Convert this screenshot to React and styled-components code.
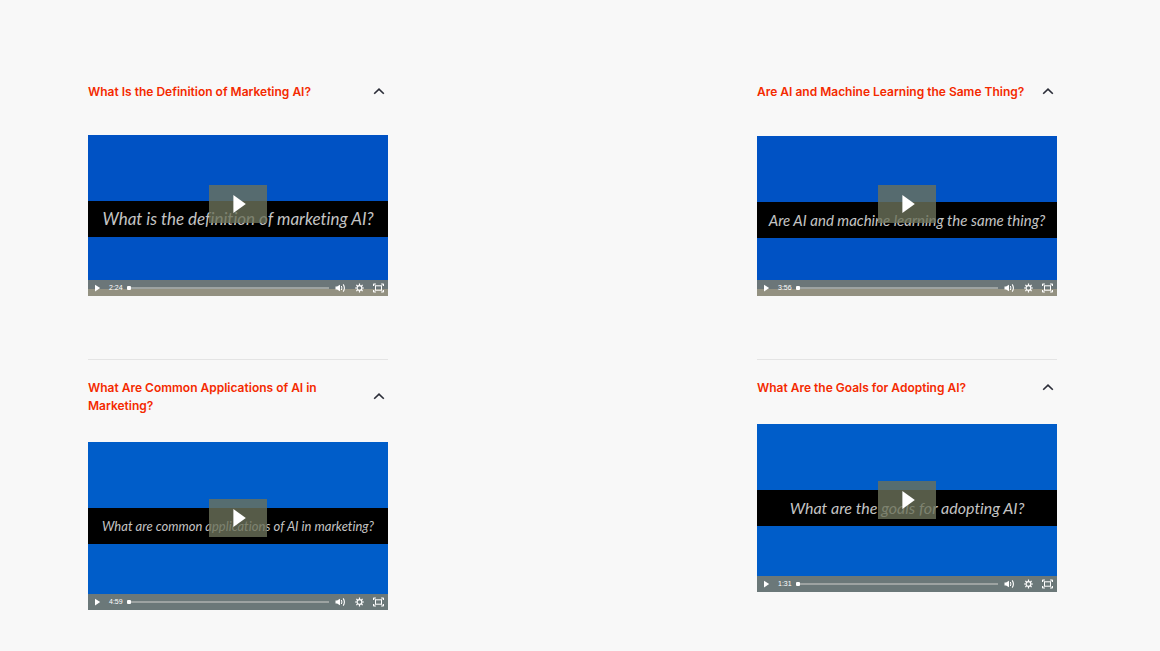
import React, { useState } from 'react'
import styled, { createGlobalStyle } from 'styled-components'

const columns = [
  [
    { id: 'definition', title: 'What Is the Definition of Marketing AI?', caption: 'What is the definition of marketing AI?', size: 17, time: '2:24', color: '#0052c4', inset: '7px 0 7px' },
    { id: 'applications', title: 'What Are Common Applications of AI in Marketing?', caption: 'What are common applications of AI in marketing?', size: 13, time: '4:59', color: '#005dc9', inset: '0' },
  ],
  [
    { id: 'learning', title: 'Are AI and Machine Learning the Same Thing?', caption: 'Are AI and machine learning the same thing?', size: 15, time: '3:56', color: '#0052c4', inset: '8px 0 7px' },
    { id: 'goals', title: 'What Are the Goals for Adopting AI?', caption: 'What are the goals for adopting AI?', size: 16, time: '1:31', color: '#005dc9', inset: '0' },
  ],
]

const Chevron = ({ open }) => (
  <ChevronIcon $open={open} width="12" height="10" viewBox="0 0 12 10" aria-hidden="true">
    <path d="M1.2 6.8 6 2.1l4.8 4.7" fill="none" stroke="#2b2d38" strokeWidth="1.6" />
  </ChevronIcon>
)

const VolumeIcon = () => (
  <svg width="11" height="10" viewBox="0 0 11 10" fill="none" stroke="#fff">
    <path d="M0.5 3.6h1.6L5 1.7v6.6L2.1 6.4H0.5z" fill="#fff" stroke="none" />
    <path d="M6.4 3q1 2 0 4" strokeWidth="1" />
    <path d="M8.2 1.4q2.4 3.6 0 7.2" strokeWidth="1.1" />
  </svg>
)

const GearIcon = () => (
  <svg width="9" height="10" viewBox="0 0 9 10" fill="none" stroke="#fff">
    <circle cx="4.5" cy="5" r="2.4" strokeWidth="1.2" />
    <path d="M4.5.6v1.6M4.5 7.8v1.6M.1 5h1.6M7.3 5h1.6M1.4 1.9l1.1 1.1M6.5 7l1.1 1.1M7.6 1.9 6.5 3M2.5 7 1.4 8.1" strokeWidth="1.2" />
  </svg>
)

const FullscreenIcon = () => (
  <svg width="11" height="10" viewBox="0 0 11 10" fill="none" stroke="#fff">
    <path d="M.5 3V1h2.4M8.1 1h2.4v2M10.5 7v2H8.1M2.9 9H.5V7" strokeWidth="1" />
    <rect x="2.5" y="2.8" width="6" height="4.4" strokeWidth="1" />
    <path d="M.6 1.1 2.5 2.8M10.4 1.1 8.5 2.8M.6 8.9 2.5 7.2M10.4 8.9 8.5 7.2" strokeWidth=".6" />
  </svg>
)

const Video = ({ video }) => {
  const [position, setPosition] = useState(0)

  return (
    <Player $inset={video.inset}>
      <Poster $color={video.color}>
        <Band $size={video.size}>{video.caption}</Band>
      </Poster>
      <Overlay>
        <Stage>
          <BigPlay type="button" aria-label={`Play video: ${video.title}`}>
            <svg width="14" height="18" viewBox="0 0 14 18">
              <path d="M1.4 0v18l12.4-9z" fill="#fff" />
            </svg>
          </BigPlay>
        </Stage>
        <Controls>
          <ControlButton type="button" aria-label="Play">
            <svg width="7" height="8" viewBox="0 0 7 8">
              <path d="M1 .8v6.6L6.2 4.1z" fill="#fff" />
            </svg>
          </ControlButton>
          <Time>{video.time}</Time>
          <Seek
            type="range"
            min="0"
            max="100"
            aria-label="Playback position"
            value={position}
            onChange={(event) => setPosition(event.target.value)}
          />
          <ControlButton type="button" aria-label="Mute"><VolumeIcon /></ControlButton>
          <ControlButton type="button" aria-label="Show settings menu"><GearIcon /></ControlButton>
          <ControlButton type="button" aria-label="Fullscreen"><FullscreenIcon /></ControlButton>
        </Controls>
      </Overlay>
    </Player>
  )
}

const Question = ({ video }) => {
  const [open, setOpen] = useState(true)

  return (
    <Item>
      <Heading>
        <Toggle
          type="button"
          id={`${video.id}-toggle`}
          aria-expanded={open}
          aria-controls={`${video.id}-panel`}
          onClick={() => setOpen(!open)}
        >
          <Title>{video.title}</Title>
          <Chevron open={open} />
        </Toggle>
      </Heading>
      <Panel id={`${video.id}-panel`} role="region" aria-labelledby={`${video.id}-toggle`} hidden={!open}>
        <Video video={video} />
      </Panel>
    </Item>
  )
}

const App = () => (
  <>
    <GlobalStyle />
    <Page>
      {columns.map((videos) => (
        <Column key={videos[0].id}>
          {videos.map((video) => <Question key={video.id} video={video} />)}
        </Column>
      ))}
    </Page>
  </>
)

const GlobalStyle = createGlobalStyle`
  *, *::before, *::after {
    box-sizing: border-box;
  }

  body {
    margin: 0;
    background: #f8f8f8;
    font-family: Inter, 'Liberation Sans', sans-serif;
  }
`

const Page = styled.main`
  display: grid;
  grid-template-columns: repeat(2, minmax(0, 300px));
  justify-content: space-between;
  align-items: start;
  padding: 64px 103px 0 88px;
`

const Column = styled.div`
  display: flex;
  flex-direction: column;
  gap: 63px;
`

const Item = styled.section`
  & + & {
    border-top: 1px solid #e4e4e4;
  }
`

const Heading = styled.h3`
  margin: 0;
`

const Toggle = styled.button`
  display: flex;
  align-items: center;
  justify-content: space-between;
  gap: 12px;
  width: 100%;
  padding: 19px 3px 27px 0;
  border: 0;
  background: none;
  color: #f42a00;
  font: 600 12px/18px Inter, 'Liberation Sans', sans-serif;
  text-align: left;
  cursor: pointer;
`

const Title = styled.span`
  flex: 1;
`

const ChevronIcon = styled.svg`
  flex: none;
  transform: ${({ $open }) => ($open ? 'none' : 'rotate(180deg)')};
`

const Panel = styled.div`
  width: 100%;
`

const Player = styled.div`
  position: relative;
  display: flex;
  min-height: 168px;
  padding: ${({ $inset }) => $inset};
`

const Poster = styled.div`
  flex: 1;
  min-width: 0;
  padding-top: 66px;
  background: ${({ $color }) => $color};
`

const Band = styled.div`
  display: flex;
  align-items: center;
  justify-content: center;
  height: 36px;
  background: #000;
  color: #c4c4c4;
  font: italic 400 ${({ $size }) => $size}px/20px Lato, 'Open Sans', sans-serif;
  font-variant-ligatures: none;
  white-space: nowrap;
`

const Overlay = styled.div`
  position: absolute;
  inset: 0;
  display: flex;
  flex-direction: column;
`

const Stage = styled.div`
  flex: 1;
  display: flex;
  align-items: center;
  justify-content: center;
`

const BigPlay = styled.button`
  display: flex;
  align-items: center;
  justify-content: center;
  width: 58px;
  height: 38px;
  padding: 0 0 0 2px;
  border: 0;
  background: rgba(108, 114, 90, 0.8);
  cursor: pointer;
`

const Controls = styled.div`
  display: flex;
  align-items: center;
  height: 16px;
  background: rgba(127, 125, 106, 0.84);
`

const ControlButton = styled.button`
  display: flex;
  align-items: center;
  justify-content: center;
  width: 19px;
  height: 16px;
  padding: 0;
  border: 0;
  background: none;
  cursor: pointer;
`

const Time = styled.span`
  width: 20px;
  padding-left: 2px;
  color: #fff;
  font: 400 7px/16px 'Liberation Sans', sans-serif;
`

const Seek = styled.input`
  flex: 1;
  min-width: 0;
  height: 16px;
  margin: 0 2px 0 0;
  appearance: none;
  background: none;
  cursor: pointer;

  &::-webkit-slider-runnable-track {
    height: 2px;
    background: #9da3a2;
  }

  &::-webkit-slider-thumb {
    appearance: none;
    width: 4px;
    height: 4px;
    margin-top: -1px;
    border-radius: 1px;
    background: #fff;
  }
`

export default App
